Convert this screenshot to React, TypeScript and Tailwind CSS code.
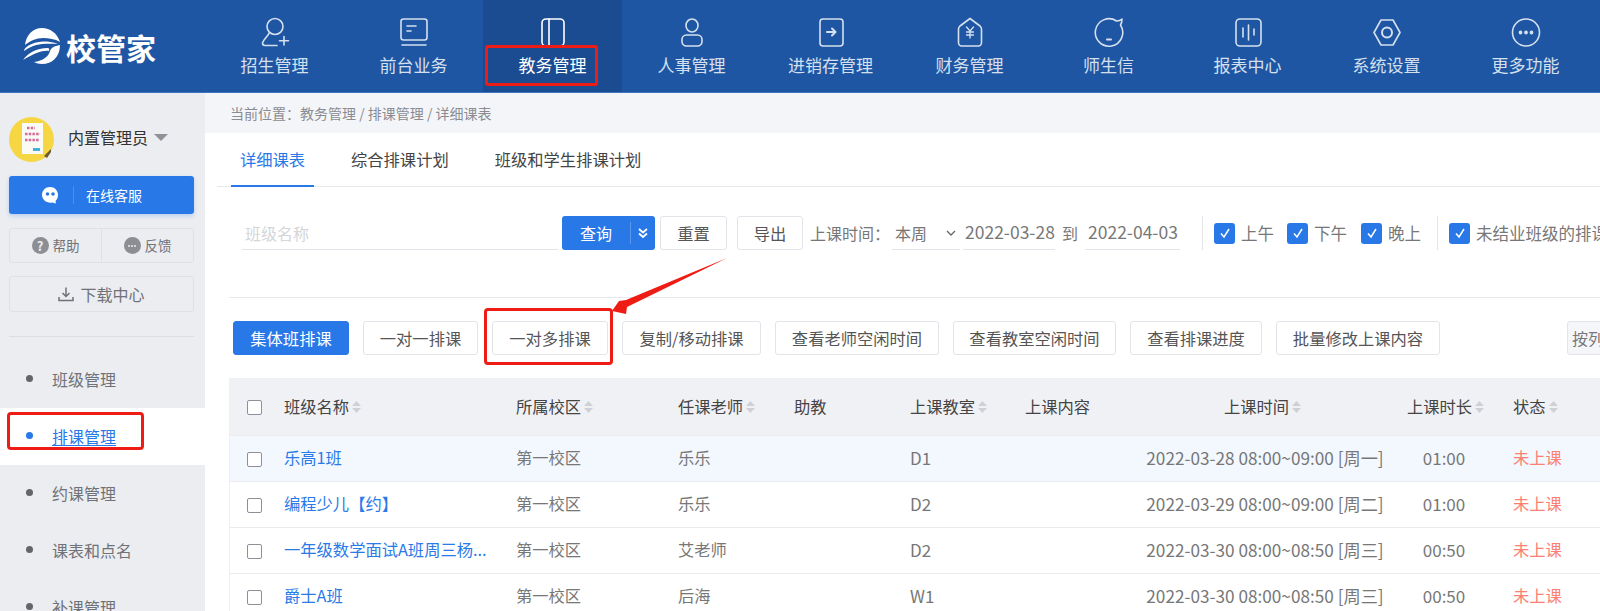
import React from "react";

const FONT = '"Noto Sans CJK SC", "Noto Sans", sans-serif';

const S = { fill: "none", stroke: "currentColor", strokeWidth: 1.6, strokeLinecap: "round" as const, strokeLinejoin: "round" as const };

const navIcons: React.ReactNode[] = [
  <g {...S}><circle cx="15" cy="9.5" r="8" /><path d="M9.5 15.5 C 8 19.5 3.5 22 2.5 26 C 2.5 27.5 3.5 28.5 5 28.5 H17" /><path d="M24 19.5 V28 M19.5 23.7 H28.5" /></g>,
  <g {...S}><rect x="2" y="2" width="26" height="21" rx="2.5" /><path d="M8 9 H17 M8 14 H12" /><path d="M3 28 H27" /></g>,
  <g {...S}><rect x="4" y="2" width="22" height="27" rx="4" /><path d="M11 2 V29" /></g>,
  <g {...S}><ellipse cx="15" cy="8.5" rx="6" ry="6.5" /><rect x="5" y="18" width="20" height="11" rx="4.5" /></g>,
  <g {...S}><rect x="4" y="2" width="23" height="27" rx="3" /><path d="M11 15 H19 M16 11.5 L19.5 15 L16 18.5" strokeWidth="2" /></g>,
  <g {...S}><path d="M15 1.5 L25 9 C 26 10 26.5 11 26.5 12 V25.5 C 26.5 27.5 25 29 23.5 29 H6.5 C 5 29 3.5 27.5 3.5 25.5 V12 C 3.5 11 4 10 5 9 Z" /><path d="M11.5 10 L15 14 L18.5 10 M15 14 V21 M11.5 15 H18.5 M11.5 18 H18.5" strokeWidth="1.3" /></g>,
  <g {...S}><path d="M22.5 4 C 24.5 4 26.5 3.5 28 2 C 28 4.5 27.5 6.5 26.5 8 A 13.7 13.7 0 1 1 22.5 4 Z" /><path d="M13 22.5 H17" strokeWidth="2" /></g>,
  <g {...S}><rect x="3" y="2" width="25" height="27" rx="4" /><path d="M10 11 V20 M15.5 8 V23 M21 12 V18" /></g>,
  <g {...S}><path d="M9 3 H21 L28 15.5 L21 28 H9 L2 15.5 Z" /><circle cx="15" cy="15.5" r="5" strokeWidth="2" /></g>,
  <g {...S}><circle cx="15" cy="15.5" r="13.5" /><circle cx="9.5" cy="15.5" r="1.1" fill="currentColor" /><circle cx="15" cy="15.5" r="1.1" fill="currentColor" /><circle cx="20.5" cy="15.5" r="1.1" fill="currentColor" /></g>,
];

const navLabels = ["招生管理", "前台业务", "教务管理", "人事管理", "进销存管理", "财务管理", "师生信", "报表中心", "系统设置", "更多功能"];

function Logo() {
  return (
    <div className="flex w-[205px] shrink-0 items-center pl-[23px] pt-[1px]">
      <svg width="37" height="37" viewBox="0 0 37 37" className="shrink-0">
        <path fill="#fff" d="M2 17 C 3 7 10 0 19 0 C 27 0 34 5 37 14 C 32 11 26 10 20 10 C 13 10 7 13 2 17 Z" />
        <path fill="#fff" d="M1 23 C 1 20 8 14 20 13.5 C 25 13.5 30 14 35 16 C 29 15.5 24 15.5 19 16 C 11 17 5 20 1 23 Z" />
        <path fill="#fff" d="M0 32 C 5 25 13 20 25 20 C 26 20 26.5 21 26 23 C 20 22 12 25 0 32 Z" />
        <path fill="#fff" d="M37 17 C 37 29 29 36 19 36 C 16 36 13 35 11 34 C 20 33 26 28 27 23 C 28 20 31 18 37 17 Z" />
      </svg>
      <span className="ml-[6px] whitespace-nowrap text-[30px] font-bold leading-none text-white">校管家</span>
    </div>
  );
}

function Header() {
  return (
    <header className="flex h-[93px] shrink-0 border-b border-[#3c76bd] bg-[#1f56a3]">
      <Logo />
      {navLabels.map((label, i) => (
        <div
          key={label}
          className={`flex w-[139px] shrink-0 flex-col items-center pt-[17px] ${i === 2 ? "bg-[#1b4b90] text-white" : "text-[#d5e0ef]"}`}
        >
          <svg width="30" height="31" viewBox="0 0 30 31" className="shrink-0">{navIcons[i]}</svg>
          <span className="mt-[5px] whitespace-nowrap text-[17px] leading-[24px]">{label}</span>
        </div>
      ))}
    </header>
  );
}

function Avatar() {
  return (
    <svg width="45" height="45" viewBox="0 0 45 45" className="shrink-0">
      <circle cx="22.5" cy="22.5" r="22.5" fill="#f6d743" />
      <rect x="13" y="6" width="21" height="31" fill="#fbfbf6" />
      <g stroke="#d66a9a" strokeWidth="2.4" strokeDasharray="2.5 1.2" fill="none">
        <path d="M18 11 H26" />
        <path d="M16 17 H31" />
        <path d="M16 23 H30" />
      </g>
      <rect x="24" y="31" width="7" height="3" fill="#45aee0" />
      <path d="M35 39 L42 32 L42 35 L38 41 Z" fill="#6b5a32" />
    </svg>
  );
}

function Sidebar() {
  const items = ["班级管理", "排课管理", "约课管理", "课表和点名", "补课管理"];
  return (
    <aside className="flex w-[205px] shrink-0 flex-col overflow-hidden bg-[#ebedf1] pt-[24px]">
      <div className="flex h-[45px] shrink-0 items-center pl-[9px]">
        <Avatar />
        <span className="ml-[14px] -mt-[6px] text-[16px] leading-none text-[#333]">内置管理员</span>
        <span className="ml-[6px] -mt-[4px] h-0 w-0 border-x-[7px] border-t-[7px] border-x-transparent border-t-[#8f9298]" />
      </div>
      <div className="mx-[9px] mt-[14px] flex h-[38px] w-[185px] shrink-0 items-center rounded-[3px] bg-[#2878e8] text-white shadow-[0_2px_4px_rgba(40,120,232,0.25)]">
        <svg width="18" height="18" viewBox="0 0 18 18" className="ml-[32px] shrink-0">
          <path fill="#fff" d="M9 1 C 13.5 1 17 4.5 17 9 C 17 11.5 16 13.5 14.5 15 L 15 17.5 L 11.5 16.5 C 6 17.5 1 14 1 9 C 1 4.5 4.5 1 9 1 Z" />
          <circle cx="6.5" cy="8" r="1.8" fill="#2878e8" />
          <circle cx="12" cy="8" r="1.8" fill="#2878e8" />
        </svg>
        <span className="ml-[14px] h-[18px] w-px bg-[#4b8eec]" />
        <span className="ml-[12px] text-[14px] leading-none">在线客服</span>
      </div>
      <div className="mx-[9px] mt-[14px] flex h-[35px] w-[185px] shrink-0 rounded-[3px] border border-[#dfe1e6] text-[13.5px] text-[#707278]">
        <div className="flex flex-1 items-center justify-center gap-[4px] border-r border-[#dfe1e6]">
          <span className="flex h-[17px] w-[17px] items-center justify-center rounded-full bg-[#8c8e94] text-[13px] font-bold leading-none text-[#ebedf1]">?</span>
          <span>帮助</span>
        </div>
        <div className="flex flex-1 items-center justify-center gap-[4px]">
          <span className="flex h-[17px] w-[17px] items-center justify-center gap-px rounded-full bg-[#8c8e94]">
            <i className="h-[2px] w-[2px] rounded-full bg-[#ebedf1]" />
            <i className="h-[2px] w-[2px] rounded-full bg-[#ebedf1]" />
            <i className="h-[2px] w-[2px] rounded-full bg-[#ebedf1]" />
          </span>
          <span>反馈</span>
        </div>
      </div>
      <div className="mx-[9px] mt-[13px] flex h-[36px] w-[185px] shrink-0 items-center justify-center gap-[6px] rounded-[3px] border border-[#dfe1e6] text-[16px] text-[#707278]">
        <svg width="16" height="16" viewBox="0 0 16 16" fill="none" stroke="currentColor" strokeWidth="1.5">
          <path d="M8 1.5 V10 M4.5 7 L8 10.5 L11.5 7 M1 11 V14.5 H15 V11" />
        </svg>
        <span>下载中心</span>
      </div>
      <div className="mx-[9px] mt-[24px] h-px w-[185px] shrink-0 bg-[#dcdee3]" />
      <nav className="mt-[14px] flex shrink-0 flex-col">
        {items.map((t, i) => (
          <div key={t} className={`flex h-[57px] shrink-0 items-center pl-[26px] pb-[2px] text-[16px] ${i === 1 ? "bg-white text-[#2878e8]" : "text-[#707278]"}`}>
            <span className={`h-[7px] w-[7px] rounded-full ${i === 1 ? "bg-[#2878e8]" : "bg-[#636569]"}`} />
            <span className={`ml-[19px] ${i === 1 ? "underline underline-offset-2" : ""}`}>{t}</span>
          </div>
        ))}
      </nav>
    </aside>
  );
}

function Btn({ w, primary, children }: { w: string; primary?: boolean; children: React.ReactNode }) {
  return (
    <div className={`flex h-[34px] shrink-0 items-center justify-center whitespace-nowrap rounded-[3px] border text-[16.3px] ${w} ${primary ? "border-[#2878e8] bg-[#2878e8] text-white" : "border-[#e2e4ea] bg-white text-[#555]"}`}>
      {children}
    </div>
  );
}

function Check({ label, cls }: { label: string; cls: string }) {
  return (
    <div className={`flex shrink-0 items-center whitespace-nowrap text-[16.5px] text-[#777] ${cls}`}>
      <span className="flex h-[21px] w-[21px] items-center justify-center rounded-[3px] bg-[#2878e8]">
        <svg width="12" height="12" viewBox="0 0 12 12" fill="none" stroke="#fff" strokeWidth="1.5"><path d="M2 6.5 L5 10 L10 2" /></svg>
      </span>
      <span className="ml-[6px]">{label}</span>
    </div>
  );
}

function Filter() {
  return (
    <div className="mt-[29px] flex h-[34px] items-stretch pl-[37px] text-[16px]">
      <div className="flex w-[316px] shrink-0 items-center border-b border-[#e2e4ea] pl-[3px] text-[#d4d6da]">班级名称</div>
      <div className="ml-[4px] flex h-[34px] w-[93px] shrink-0 items-center rounded-[3px] bg-[#2878e8] text-white">
        <span className="w-[68px] text-center">查询</span>
        <span className="h-[22px] w-px bg-[#5a97ed]" />
        <svg width="12" height="12" viewBox="0 0 12 12" fill="none" stroke="#fff" strokeWidth="1.8" className="ml-[6px]"><path d="M2 2 L6 5.5 L10 2 M2 6.5 L6 10 L10 6.5" /></svg>
      </div>
      <Btn w="ml-[5px] w-[67px]">重置</Btn>
      <Btn w="ml-[10px] w-[66px]">导出</Btn>
      <span className="ml-[7px] flex w-[82px] shrink-0 items-center whitespace-nowrap text-[#777]">上课时间：</span>
      <div className="flex w-[68px] shrink-0 items-center justify-between border-b border-[#e2e4ea] pl-[3px] pr-[4px] text-[#777]">
        <span>本周</span>
        <svg width="10" height="10" viewBox="0 0 10 10" fill="none" stroke="#666" strokeWidth="1.3"><path d="M1 3 L5 7 L9 3" /></svg>
      </div>
      <span className="ml-[3px] flex w-[92px] shrink-0 items-center whitespace-nowrap border-b border-[#e2e4ea] pl-[2px] text-[17.5px] text-[#777]">2022-03-28</span>
      <span className="flex w-[30px] shrink-0 items-center justify-center text-[#777]">到</span>
      <span className="flex w-[95px] shrink-0 items-center whitespace-nowrap border-b border-[#e2e4ea] pl-[3px] text-[17.5px] text-[#777]">2022-04-03</span>
      <span className="ml-[22px] w-px shrink-0 bg-[#e2e4ea]" />
      <Check label="上午" cls="ml-[11px]" />
      <Check label="下午" cls="ml-[13px]" />
      <Check label="晚上" cls="ml-[14px]" />
      <span className="ml-[16px] w-px shrink-0 bg-[#e2e4ea]" />
      <Check label="未结业班级的排课" cls="ml-[11px]" />
    </div>
  );
}

function Actions() {
  return (
    <div className="mt-[23px] ml-[28px] flex gap-[14px]">
      <Btn w="w-[116px]" primary>集体班排课</Btn>
      <Btn w="w-[115px]">一对一排课</Btn>
      <Btn w="w-[116px]">一对多排课</Btn>
      <Btn w="w-[139px]">复制/移动排课</Btn>
      <Btn w="w-[164px]">查看老师空闲时间</Btn>
      <Btn w="w-[163px]">查看教室空闲时间</Btn>
      <Btn w="w-[132px]">查看排课进度</Btn>
      <Btn w="w-[164px]">批量修改上课内容</Btn>
      <div className="ml-[113px] flex h-[34px] w-[80px] shrink-0 items-center whitespace-nowrap rounded-[3px] border border-[#e2e4ea] bg-[#f5f6fa] pl-[4px] text-[16px] text-[#777]">按列</div>
    </div>
  );
}

function Sort() {
  return (
    <svg width="11" height="14" viewBox="0 0 11 14" className="ml-[2px] shrink-0" fill="#cdd0d5">
      <path d="M5.5 1 L10 6 H1 Z" />
      <path d="M5.5 13 L10 8 H1 Z" />
    </svg>
  );
}

function Box() {
  return <span className="mt-[1px] block h-[15px] w-[15px] rounded-[2px] border-[1.5px] border-[#8f8f9c] bg-white" />;
}

const GRID = "grid grid-cols-[54px_232px_162px_116px_116px_115px_114px_252px_108px_100px]";

const rows = [
  ["乐高1班", "第一校区", "乐乐", "", "D1", "", "2022-03-28 08:00~09:00 [周一]", "01:00"],
  ["编程少儿【约】", "第一校区", "乐乐", "", "D2", "", "2022-03-29 08:00~09:00 [周二]", "01:00"],
  ["一年级数学面试A班周三杨...", "第一校区", "艾老师", "", "D2", "", "2022-03-30 08:00~08:50 [周三]", "00:50"],
  ["爵士A班", "第一校区", "后海", "", "W1", "", "2022-03-30 08:00~08:50 [周三]", "00:50"],
];

function Table() {
  const head: [string, boolean][] = [["班级名称", true], ["所属校区", true], ["任课老师", true], ["助教", false], ["上课教室", true], ["上课内容", false]];
  return (
    <div className="mt-[23px] ml-[24px] w-[1400px] border-l border-[#eef0f3] text-[16.3px]">
      <div className={`${GRID} h-[58px] items-center border-b border-[#e9ebef] bg-[#f0f1f5] text-[#444]`}>
        <div className="flex justify-center pr-[6px]"><Box /></div>
        {head.map(([t, s]) => (
          <div key={t} className="flex items-center whitespace-nowrap">{t}{s && <Sort />}</div>
        ))}
        <div className="flex items-center justify-center whitespace-nowrap pr-[4px]">上课时间<Sort /></div>
        <div className="flex items-center justify-center whitespace-nowrap pl-[2px]">上课时长<Sort /></div>
        <div className="flex items-center whitespace-nowrap pl-[14px]">状态<Sort /></div>
      </div>
      {rows.map((r, i) => (
        <div key={i} className={`${GRID} h-[46px] items-center border-b border-[#e9ebef] text-[#777] ${i === 0 ? "bg-[#f3f8ff]" : "bg-white"}`}>
          <div className="flex justify-center pr-[6px]"><Box /></div>
          <div className="-mt-[2px] whitespace-nowrap text-[#2a7ae8]">{r[0]}</div>
          <div className="-mt-[2px] whitespace-nowrap">{r[1]}</div>
          <div className="-mt-[2px] whitespace-nowrap">{r[2]}</div>
          <div />
          <div className="-mt-[2px] text-[17px]">{r[4]}</div>
          <div />
          <div className="-mt-[2px] whitespace-nowrap text-center text-[17.2px]">{r[6]}</div>
          <div className="-mt-[2px] pr-[2px] text-center text-[17px]">{r[7]}</div>
          <div className="-mt-[2px] whitespace-nowrap pl-[14px] text-[#fb8073]">未上课</div>
        </div>
      ))}
    </div>
  );
}

function Main() {
  return (
    <main className="min-w-0 flex-1 overflow-hidden bg-white">
      <div className="flex h-[40px] items-center bg-[#f3f5f8] pl-[25px] text-[14px] text-[#8a8c92]">当前位置：教务管理 / 排课管理 / 详细课表</div>
      <div className="ml-[12px] flex h-[54px] gap-[28px] border-b border-[#e6e8ec] pl-[14px] text-[16.3px] text-[#444]">
        <div className="flex h-[54px] w-[83px] items-center justify-center border-b-2 border-[#2878e8] text-[#2878e8]">详细课表</div>
        <div className="flex items-center whitespace-nowrap px-[9px]">综合排课计划</div>
        <div className="flex items-center whitespace-nowrap px-[9px]">班级和学生排课计划</div>
      </div>
      <Filter />
      <div className="ml-[24px] mt-[47px] h-px bg-[#e6e8ec]" />
      <Actions />
      <Table />
    </main>
  );
}

export default function App() {
  return (
    <div className="relative flex h-[611px] w-[1600px] flex-col overflow-hidden" style={{ fontFamily: FONT }}>
      <Header />
      <div className="flex min-h-0 flex-1">
        <Sidebar />
        <Main />
      </div>
      <div className="pointer-events-none absolute left-[485px] top-[45px] h-[41px] w-[113px] rounded-[3px] border-[3px] border-[#ee1c14]" />
      <div className="pointer-events-none absolute left-[7px] top-[412px] h-[38px] w-[137px] rounded-[4px] border-[3px] border-[#ee1c14]" />
      <div className="pointer-events-none absolute left-[484px] top-[308px] h-[57px] w-[129px] rounded-[4px] border-[3px] border-[#ee1c14]" />
      <svg className="pointer-events-none absolute left-[600px] top-[250px]" width="135" height="70" viewBox="600 250 135 70">
        <polygon fill="#ee1c14" points="727,258 626,300 619,301 612,311 626,314 627,307" />
      </svg>
    </div>
  );
}
